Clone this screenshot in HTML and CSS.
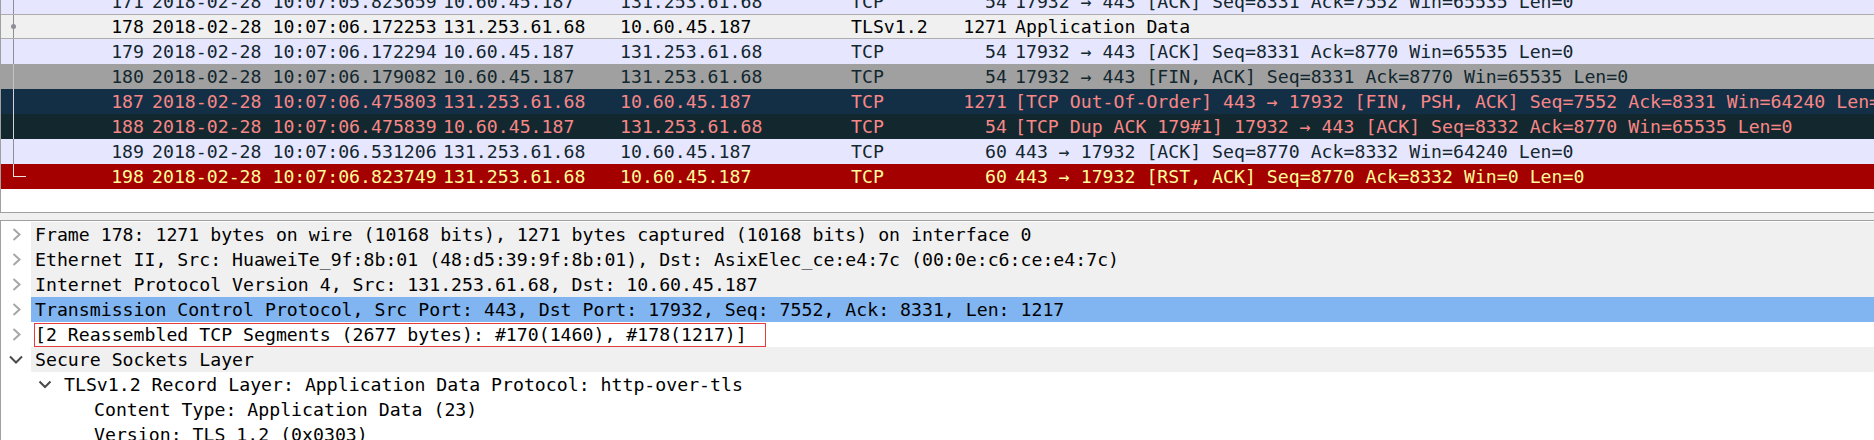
FILE: index.html
```html
<!DOCTYPE html>
<html lang="en">
<head>
  <meta charset="UTF-8" />
  <title>Packet capture</title>
  <link rel="stylesheet" href="styles.css">
</head>
<body>

  <!-- Packet list -->
  <div class="packet-list">
    <div class="rows">
      <div class="pkt tcp">
        <span class="no">171</span><span>2018-02-28 10:07:05.823659</span><span>10.60.45.187</span><span>131.253.61.68</span><span>TCP</span><span class="len">54</span><span class="info">17932 → 443 [ACK] Seq=8331 Ack=7552 Win=65535 Len=0</span>
      </div>
      <div class="pkt current">
        <span class="no">178</span><span>2018-02-28 10:07:06.172253</span><span>131.253.61.68</span><span>10.60.45.187</span><span>TLSv1.2</span><span class="len">1271</span><span class="info">Application Data</span>
      </div>
      <div class="pkt tcp">
        <span class="no">179</span><span>2018-02-28 10:07:06.172294</span><span>10.60.45.187</span><span>131.253.61.68</span><span>TCP</span><span class="len">54</span><span class="info">17932 → 443 [ACK] Seq=8331 Ack=8770 Win=65535 Len=0</span>
      </div>
      <div class="pkt fin">
        <span class="no">180</span><span>2018-02-28 10:07:06.179082</span><span>10.60.45.187</span><span>131.253.61.68</span><span>TCP</span><span class="len">54</span><span class="info">17932 → 443 [FIN, ACK] Seq=8331 Ack=8770 Win=65535 Len=0</span>
      </div>
      <div class="pkt bad hover">
        <span class="no">187</span><span>2018-02-28 10:07:06.475803</span><span>131.253.61.68</span><span>10.60.45.187</span><span>TCP</span><span class="len">1271</span><span class="info">[TCP Out-Of-Order] 443 → 17932 [FIN, PSH, ACK] Seq=7552 Ack=8331 Win=64240 Len=0</span>
      </div>
      <div class="pkt bad">
        <span class="no">188</span><span>2018-02-28 10:07:06.475839</span><span>10.60.45.187</span><span>131.253.61.68</span><span>TCP</span><span class="len">54</span><span class="info">[TCP Dup ACK 179#1] 17932 → 443 [ACK] Seq=8332 Ack=8770 Win=65535 Len=0</span>
      </div>
      <div class="pkt tcp">
        <span class="no">189</span><span>2018-02-28 10:07:06.531206</span><span>131.253.61.68</span><span>10.60.45.187</span><span>TCP</span><span class="len">60</span><span class="info">443 → 17932 [ACK] Seq=8770 Ack=8332 Win=64240 Len=0</span>
      </div>
      <div class="pkt rst last">
        <span class="no">198</span><span>2018-02-28 10:07:06.823749</span><span>131.253.61.68</span><span>10.60.45.187</span><span>TCP</span><span class="len">60</span><span class="info">443 → 17932 [RST, ACK] Seq=8770 Ack=8332 Win=0 Len=0</span>
      </div>
    </div>
  </div>

  <div class="splitter"></div>

  <!-- Packet details -->
  <div class="tree">
    <div class="node shade">
      <span class="twisty"><svg width="9" height="13" viewBox="0 0 9 13"><polyline points="1.5,1 7.5,6.5 1.5,12" class="closed"/></svg></span>
      <span class="label">Frame 178: 1271 bytes on wire (10168 bits), 1271 bytes captured (10168 bits) on interface 0</span>
    </div>
    <div class="node shade">
      <span class="twisty"><svg width="9" height="13" viewBox="0 0 9 13"><polyline points="1.5,1 7.5,6.5 1.5,12" class="closed"/></svg></span>
      <span class="label">Ethernet II, Src: HuaweiTe_9f:8b:01 (48:d5:39:9f:8b:01), Dst: AsixElec_ce:e4:7c (00:0e:c6:ce:e4:7c)</span>
    </div>
    <div class="node shade">
      <span class="twisty"><svg width="9" height="13" viewBox="0 0 9 13"><polyline points="1.5,1 7.5,6.5 1.5,12" class="closed"/></svg></span>
      <span class="label">Internet Protocol Version 4, Src: 131.253.61.68, Dst: 10.60.45.187</span>
    </div>
    <div class="node selected">
      <span class="twisty"><svg width="9" height="13" viewBox="0 0 9 13"><polyline points="1.5,1 7.5,6.5 1.5,12" class="closed"/></svg></span>
      <span class="label">Transmission Control Protocol, Src Port: 443, Dst Port: 17932, Seq: 7552, Ack: 8331, Len: 1217</span>
    </div>
    <div class="node marked">
      <span class="twisty"><svg width="9" height="13" viewBox="0 0 9 13"><polyline points="1.5,1 7.5,6.5 1.5,12" class="closed"/></svg></span>
      <span class="label"><span class="mark">[2 Reassembled TCP Segments (2677 bytes): #170(1460), #178(1217)]</span></span>
    </div>
    <div class="node shade">
      <span class="twisty"><svg width="14" height="9" viewBox="0 0 14 9"><polyline points="1,1.5 7,7.5 13,1.5" class="open"/></svg></span>
      <span class="label">Secure Sockets Layer</span>
    </div>
    <div class="node lvl1">
      <span class="twisty"><svg width="14" height="9" viewBox="0 0 14 9"><polyline points="1.5,1.5 7,7 12.5,1.5" class="open"/></svg></span>
      <span class="label">TLSv1.2 Record Layer: Application Data Protocol: http-over-tls</span>
    </div>
    <div class="node lvl2">
      <span class="twisty"></span>
      <span class="label">Content Type: Application Data (23)</span>
    </div>
    <div class="node lvl2">
      <span class="twisty"></span>
      <span class="label">Version: TLS 1.2 (0x0303)</span>
    </div>
  </div>

</body>
</html>
```

FILE: styles.css
```css
body {
  margin: 0;
  background: #fff;
  color: #000;
  font-family: "DejaVu Sans Mono", "Liberation Mono", monospace;
  font-size: 18.2px;
  overflow: hidden;
}

/* packet list */
.packet-list {
  height: 212px;
  border-left: 1px solid #a0a0a0;
  border-bottom: 1px solid #a0a0a0;
  overflow: hidden;
}
.rows {
  margin-top: -11px;
}
.pkt {
  --trk: #8e8e96;
  position: relative;
  display: grid;
  grid-template-columns: 147px 291px 177px 231px 93px 71px 1fr;
  height: 25px;
  line-height: 25px;
  white-space: nowrap;
}
.pkt span {
  padding: 0 4px;
  overflow: hidden;
}
.pkt .no,
.pkt .len {
  text-align: right;
}
.pkt::before {
  content: "";
  position: absolute;
  left: 12px;
  top: 0;
  bottom: 0;
  width: 1px;
  background: var(--trk);
}
.tcp {
  background: #e7e6ff;
  color: #12272e;
}
.current {
  box-sizing: border-box;
  background: #f0f0f0;
  border-top: 1px solid #adadad;
  border-bottom: 1px solid #adadad;
  line-height: 23px;
  color: #000;
}
.current::after {
  content: "";
  position: absolute;
  left: 10px;
  top: 9px;
  width: 5px;
  height: 5px;
  border-radius: 50%;
  background: #8e8e96;
}
.fin {
  --trk: #c4c4c8;
  background: #a0a0a0;
  color: #12272e;
}
.bad {
  --trk: #d4d4d8;
  background: #12272e;
  color: #f78787;
}
.bad.hover {
  background: #132f45;
}
.rst {
  --trk: #f0e0e0;
  background: #a40000;
  color: #fffc9c;
}
.last::before {
  bottom: auto;
  height: 13px;
}
.last::after {
  content: "";
  position: absolute;
  left: 12px;
  top: 12px;
  width: 13px;
  height: 1px;
  background: var(--trk);
}

.splitter {
  height: 7px;
  background: #f0f0f0;
}

/* packet details */
.tree {
  border-top: 1px solid #a0a0a0;
  border-left: 1px solid #a0a0a0;
  padding-top: 1px;
}
.node {
  display: flex;
  height: 25px;
  line-height: 25px;
  white-space: nowrap;
}
.twisty {
  flex: none;
  width: 30px;
  display: flex;
  align-items: center;
  justify-content: center;
}
.lvl1 .twisty {
  margin-left: 29px;
}
.lvl2 .twisty {
  margin-left: 59px;
}
.label {
  flex: 1;
  padding-left: 4px;
}
.shade .label {
  background: #f0f0f0;
}
.selected .label {
  background: #80b5f1;
}
.closed,
.open {
  fill: none;
  stroke-width: 2;
}
.closed {
  stroke: #a6a6a6;
}
.open {
  stroke: #4a4a4a;
}
.marked .label {
  padding-left: 3px;
}
.mark {
  display: inline-block;
  margin-top: 1px;
  padding: 0 18px 0 0;
  line-height: 22px;
  border: 1px solid #e63b3b;
}
```
